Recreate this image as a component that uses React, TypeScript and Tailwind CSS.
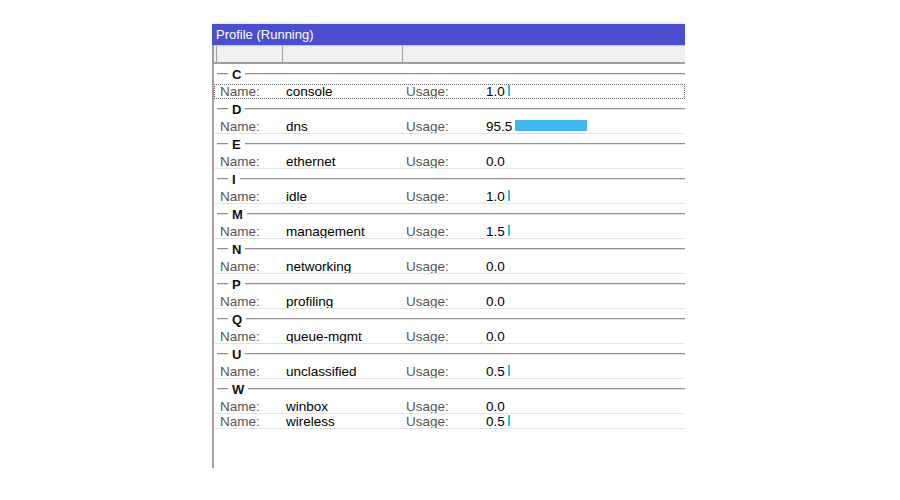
import React from 'react';

interface Profile {
  name: string;
  usage: number;
}

const groups: { letter: string; items: Profile[] }[] = [
  { letter: 'C', items: [{ name: 'console', usage: 1.0 }] },
  { letter: 'D', items: [{ name: 'dns', usage: 95.5 }] },
  { letter: 'E', items: [{ name: 'ethernet', usage: 0.0 }] },
  { letter: 'I', items: [{ name: 'idle', usage: 1.0 }] },
  { letter: 'M', items: [{ name: 'management', usage: 1.5 }] },
  { letter: 'N', items: [{ name: 'networking', usage: 0.0 }] },
  { letter: 'P', items: [{ name: 'profiling', usage: 0.0 }] },
  { letter: 'Q', items: [{ name: 'queue-mgmt', usage: 0.0 }] },
  { letter: 'U', items: [{ name: 'unclassified', usage: 0.5 }] },
  {
    letter: 'W',
    items: [
      { name: 'winbox', usage: 0.0 },
      { name: 'wireless', usage: 0.5 },
    ],
  },
];

const GroupHeader: React.FC<{ letter: string }> = ({ letter }) => (
  <div className="h-[20px] flex items-center pl-[3px]">
    <div className="w-[11px] h-[2px] border-t border-[#8f8f8f] border-b border-b-[#e2e2e2]" />
    <span className="px-[4px] text-[13px] font-bold text-[#111] leading-none">{letter}</span>
    <div className="flex-1 h-[2px] border-t border-[#8f8f8f] border-b border-b-[#e2e2e2]" />
  </div>
);

const Row: React.FC<{ item: Profile; focused?: boolean }> = ({ item, focused }) => {
  const barWidth = item.usage <= 0 ? 0 : Math.max(2, Math.round(item.usage * 0.755));
  return (
    <div
      className={
        focused
          ? 'h-[15px] flex items-start overflow-hidden border border-dotted border-[#6b6b6b] text-[13.5px] leading-[14px]'
          : 'h-[15px] flex items-start overflow-hidden border border-transparent border-b-[#e3e3e3] text-[13.5px] leading-[14px]'
      }
    >
      <span className="w-[71px] pl-[5px] text-[#555]">Name:</span>
      <span className="w-[120px] text-black">{item.name}</span>
      <span className="w-[80px] text-[#555]">Usage:</span>
      <span className="text-black">{item.usage.toFixed(1)}</span>
      {barWidth > 0 && (
        <span className="ml-[3px] mt-[-1px] h-[12px] bg-[#3db8ec]" style={{ width: barWidth }} />
      )}
    </div>
  );
};

const App: React.FC = () => {
  return (
    <div className="w-[900px] h-[500px] bg-white" style={{ fontFamily: '"Liberation Sans", Arial, sans-serif' }}>
      <div className="ml-[212px] pt-[22px] w-[473px]">
        {/* Title */}
        <div className="h-[2px] bg-[#efefef]" />
        <div className="h-[21px] bg-[#4b4fcd] text-white text-[13px] leading-[21px] pl-[4px]">
          Profile (Running)
        </div>

        <div className="border-l-2 border-[#a0a0a0] h-[423px]">
          {/* Column header */}
          <div className="h-[19px] flex bg-[#f0f0f0] border-t border-[#c9c9c9] border-b-2 border-b-[#a0a0a0]">
            <div className="w-[3px] border-r border-[#a0a0a0]" />
            <div className="w-[66px] border-r border-[#a0a0a0]" />
            <div className="w-[120px] border-r border-[#a0a0a0]" />
            <div className="flex-1" />
          </div>

          {/* Groups */}
          {groups.map((g) => (
            <div key={g.letter}>
              <GroupHeader letter={g.letter} />
              {g.items.map((it) => (
                <Row key={it.name} item={it} focused={it.name === 'console'} />
              ))}
            </div>
          ))}
        </div>
      </div>
    </div>
  );
};

export default App;
